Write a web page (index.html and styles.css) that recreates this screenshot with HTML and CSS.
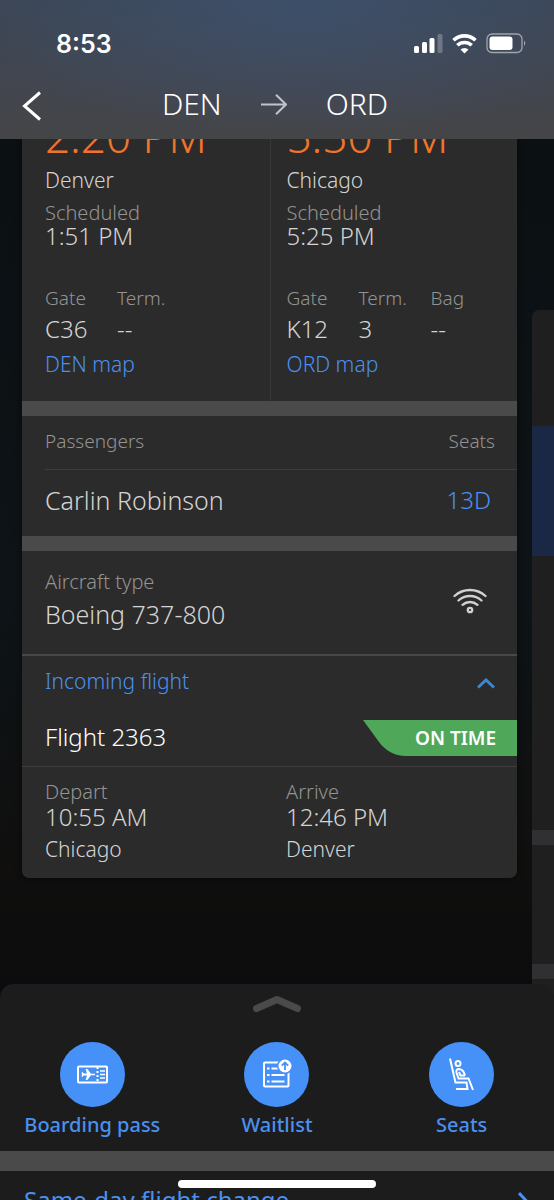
FILE: index.html
```
<!DOCTYPE html>
<html lang="en">
<head>
<meta charset="utf-8">
<meta name="viewport" content="width=device-width, initial-scale=1">
<title>DEN to ORD</title>
<link rel="stylesheet" href="styles.css">
</head>
<body>
<div class="app">
  <header class="top">
    <div class="status">
      <span class="clock">8:53</span>
      <svg class="status-icons" width="114" height="22" viewBox="0 0 114 22" aria-hidden="true">
        <g fill="#fff">
          <rect x="2" y="13" width="5" height="7" rx="1.5"/>
          <rect x="10" y="9" width="5" height="11" rx="1.5"/>
          <rect x="17.500" y="5" width="5" height="15" rx="1.500"/>
          <rect x="25.500" y="1" width="5" height="19" rx="1.500" opacity=".25"/>
          <path d="M52.500 20.500l-4-4a5.800 5.800 0 0 1 8 0z"/>
        </g>
        <g fill="none" stroke="#fff" stroke-width="3.600">
          <path d="M41.500 7.300a16 16 0 0 1 22 0"/>
          <path d="M45.300 12.300a10.500 10.500 0 0 1 14.400 0"/>
        </g>
        <rect x="75" y="1" width="35" height="18.500" rx="5" fill="none" stroke="#fff" stroke-opacity=".5" stroke-width="1.300"/>
        <rect x="77.500" y="3.500" width="23" height="13.500" rx="3" fill="#fff"/>
        <path d="M112 7.500q2.500 2.500 0 5.500z" fill="#fff" opacity=".5"/>
      </svg>
    </div>
    <div class="route">
      <button class="back" aria-label="Back">
        <svg width="20" height="30" viewBox="0 0 20 30" fill="none" stroke="#fff" stroke-width="3"><path d="M18 1.500L2.500 15L18 28.500"/></svg>
      </button>
      <h1 class="title">
        <span>DEN</span>
        <svg width="26" height="21" viewBox="0 0 26 21" fill="none" stroke="#bfc3cc" stroke-width="2"><path d="M0 10.500H25M15 .800L25 10.500L15 20.200"/></svg>
        <span>ORD</span>
      </h1>
    </div>
  </header>

  <main class="trips">
    <article class="card">
      <section class="legs">
        <div class="leg">
          <p class="big">2:20 PM</p>
          <p class="city">Denver</p>
          <p class="label sched">Scheduled</p>
          <p class="value tight">1:51 PM</p>
          <dl class="facts">
            <div><dt>Gate</dt><dd>C36</dd></div>
            <div><dt>Term.</dt><dd>--</dd></div>
          </dl>
          <a class="link" href="#den">DEN map</a>
        </div>
        <div class="leg">
          <p class="big">5:50 PM</p>
          <p class="city">Chicago</p>
          <p class="label sched">Scheduled</p>
          <p class="value tight">5:25 PM</p>
          <dl class="facts">
            <div><dt>Gate</dt><dd>K12</dd></div>
            <div><dt>Term.</dt><dd>3</dd></div>
            <div><dt>Bag</dt><dd>--</dd></div>
          </dl>
          <a class="link" href="#ord">ORD map</a>
        </div>
      </section>

      <section class="passengers bar">
        <div class="row head"><span class="label">Passengers</span><span class="label">Seats</span></div>
        <div class="row person"><span class="value">Carlin Robinson</span><a class="value seat" href="#seat">13D</a></div>
      </section>

      <section class="aircraft bar">
        <div>
          <p class="label">Aircraft type</p>
          <p class="value">Boeing 737-800</p>
        </div>
        <svg width="34" height="26" viewBox="0 0 34 26" fill="none" stroke="#d0d0d0" stroke-width="2.300" stroke-linecap="round" aria-label="Wi-Fi available">
          <path d="M1.500 8a23 23 0 0 1 31 0M5.500 12.500a17 17 0 0 1 23 0M9.500 16.800a11.500 11.500 0 0 1 15 0"/><circle cx="17" cy="22" r="2.200"/>
        </svg>
      </section>

      <section class="incoming">
        <button class="toggle" aria-expanded="true">
          <span>Incoming flight</span>
          <svg width="18" height="11" viewBox="0 0 18 11" fill="none" stroke="#3f86d0" stroke-width="3"><path d="M1 9.500L9 2L17 9.500"/></svg>
        </button>
        <div class="flight">
          <span class="value number">Flight 2363</span>
          <span class="badge">
            <svg class="badge-edge" width="46" height="36" viewBox="0 0 46 36" aria-hidden="true"><path d="M0 0H46V36H43C31 36 22 30 16 22Z" fill="#4fa85a"/></svg>
            <span class="badge-text">ON TIME</span>
          </span>
        </div>
        <div class="times">
          <div><p class="label">Depart</p><p class="value">10:55 AM</p><p class="city">Chicago</p></div>
          <div><p class="label">Arrive</p><p class="value">12:46 PM</p><p class="city">Denver</p></div>
        </div>
      </section>
    </article>
    <aside class="next" aria-label="Next trip">
      <div class="next-blue"></div>
      <div class="next-body"></div>
      <div class="next-foot"></div>
    </aside>
  </main>

  <section class="sheet">
    <button class="handle" aria-label="Expand">
      <svg width="50" height="20" viewBox="0 0 50 20" fill="none" stroke="#4a4a4a" stroke-width="7" stroke-linecap="round" stroke-linejoin="round"><path d="M4.500 14.500L25 5.500L45.500 14.500"/></svg>
    </button>
    <nav class="actions">
      <a href="#pass">
        <span class="disc"><svg width="33" height="33" viewBox="0 0 33 33" fill="none" stroke="#fff" stroke-width="2">
          <rect x="2" y="8.500" width="29" height="16" rx="1"/><path d="M21.500 9v16" stroke-dasharray="2 2"/><path d="M24 13h5M24 16.500h5M24 20h5" stroke-width="1.600"/>
          <path d="M5.800 13.500l2 2H11L9.600 11h1.800l3.500 4.700h4v1.600h-4L11.400 22H9.600L11 17.500H7.800l-2 2z" fill="#fff" stroke="none"/></svg></span>
        <span>Boarding pass</span>
      </a>
      <a href="#waitlist">
        <span class="disc"><svg width="33" height="33" viewBox="0 0 33 33" fill="none" stroke="#fff" stroke-width="2">
          <rect x="4" y="4.500" width="24.500" height="24" rx="1"/><path d="M11.500 10.500h8M11.500 17h13M11.500 23.500h13M7 10.500h2.500M7 17h2.500M7 23.500h2.500"/>
          <circle cx="25" cy="8" r="8" fill="#4691f8" stroke="none"/><circle cx="25" cy="8" r="6.500" fill="#fff" stroke="none"/><path d="M25 12V4.500M21.800 7.700l3.200-3.200l3.200 3.200" stroke="#4691f8" stroke-width="1.800"/></svg></span>
        <span>Waitlist</span>
      </a>
      <a href="#seats">
        <span class="disc"><svg width="33" height="33" viewBox="0 0 33 33" fill="none" stroke="#fff" stroke-width="2">
          <path d="M5 .500L10.500 24.500H21.500L22.500 31H11"/><circle cx="13" cy="5.500" r="2.500"/><path d="M20 17.500C19 13.500 17 11 13.500 11Q10.700 11.500 11.500 14.500L13.500 20.500H23.500L28 32"/><path d="M14 14l1.500 3.500h4.500"/></svg></span>
        <span>Seats</span>
      </a>
    </nav>
    <a class="change" href="#change">
      <span>Same-day flight change</span>
      <svg width="10" height="18" viewBox="0 0 10 18" fill="none" stroke="#4a90f0" stroke-width="3"><path d="M1 1L8.500 9L1 17"/></svg>
    </a>
    <div class="home"></div>
  </section>
</div>
</body>
</html>
```
FILE: styles.css
```
* { box-sizing: border-box; }
body { margin: 0; background: #0d0e11; color: #d4d4d4; font-family: "Noto Sans", "Open Sans", sans-serif; font-weight: 300; font-size: 21px; line-height: 28px; }
p, h1, dl, dd { margin: 0; font-weight: inherit; }
button { margin: 0; padding: 0; border: 0; background: none; color: inherit; font: inherit; }
a { color: #4a90f0; text-decoration: none; }
svg { display: block; flex: none; }

.app { display: flex; flex-direction: column; height: 100vh; overflow: hidden; }

.top { flex: none; padding: 28px 28px 0 22px; height: 139px; background: radial-gradient(ellipse 60% 100% at 55% 0, rgba(62, 82, 112, .75), rgba(62, 82, 112, 0)), linear-gradient(#3c4656, #424650 55%, #454547); color: #fff; }
.status { display: flex; justify-content: space-between; align-items: center; padding-left: 34px; height: 32px; }
.clock { font-family: Inter, sans-serif; font-size: 25px; font-weight: 600; }
.route { display: grid; grid-template-columns: 24px 1fr 22px; align-items: center; padding-top: 24px; }
.back { padding-top: 4px; }
.title { display: flex; justify-content: center; align-items: center; gap: 39px; font-size: 30px; line-height: 40px; }

.trips { flex: 1; min-height: 0; display: grid; grid-template-columns: minmax(0, 1fr) 22px; gap: 15px; align-items: start; padding-left: 22px; margin-bottom: -16px; overflow: hidden; background: linear-gradient(#0b1013, #0d1316 55%, #100f0e 85%, #0b0b0d); }
.card { background: #2b2b2b; border-radius: 0 0 7px 7px; box-shadow: 0 0 6px rgba(0, 0, 0, .5); overflow: hidden; }
.legs { display: grid; grid-template-columns: 1fr 1fr; }
.leg { padding: 0 0 23px 23px; }
.leg + .leg { padding-left: 16px; border-left: 1px solid #393939; }
.big { margin-top: -27px; font-size: 44px; line-height: 48px; color: #f0752c; }
.leg .city { margin-top: 6px; }
.label, dt { font-size: 20px; line-height: 22px; color: #939393; }
.value, dd { font-size: 25px; line-height: 32px; }
.sched { margin-top: 8px; }
.value.tight { font-size: 24px; line-height: 24px; }
.facts { display: flex; margin: 39px 0 5px; }
.facts div { width: 72px; }
.facts dt { font-size: 19px; }
.facts dd { margin-top: 4px; font-size: 24px; }
.link { display: block; }

.bar { border-top: 15px solid #4a4a4a; }
.row { display: flex; justify-content: space-between; }
.head { margin-left: 23px; padding: 14px 22px 17px 0; border-bottom: 1px solid #3d3d3d; }
.head .label { font-size: 19px; }
.person { padding: 14px 26px 20px 23px; }
.seat { font-size: 24px; }
.aircraft { display: flex; justify-content: space-between; align-items: center; padding: 20px 30px 24px 23px; }
.aircraft .value { margin-top: 5px; }

.incoming { border-top: 2px solid #484848; }
.toggle { display: flex; justify-content: space-between; align-items: center; width: 100%; padding: 11px 22px 25px 23px; color: #4a90f0; }
.toggle svg { margin-top: 5px; }
.flight { display: flex; justify-content: space-between; align-items: flex-start; padding: 0 0 10px 23px; border-bottom: 1px solid #3d3d3d; }
.number { color: #fff; font-size: 24px; line-height: 34px; }
.badge { display: flex; }
.badge-text { padding: 0 21px 0 6px; background: #4fa85a; color: #fff; font-size: 19px; font-weight: 600; line-height: 36px; }
.times { display: grid; grid-template-columns: 1fr 1fr; padding: 14px 0 15px 23px; }
.times > div + div { padding-left: 5px; }
.times .value { font-size: 24px; line-height: 28px; }
.times .city { margin-top: 4px; }

.next { display: flex; flex-direction: column; margin-top: 171px; height: 700px; border-radius: 7px 0 0 0; padding-top: 116px; background: #1f1f20; }
.next-blue { height: 130px; background: #1a2845; }
.next-body { height: 289px; border-bottom: 15px solid #303032; }
.next-foot { height: 134px; border-bottom: 15px solid #303032; }

.sheet { position: relative; flex: none; height: 216px; overflow: hidden; border-radius: 14px 14px 0 0; background: #1c1c1c; }
.handle { display: block; width: 100%; padding: 10px 0 28px; }
.handle svg { margin: 0 auto; }
.actions { display: grid; grid-template-columns: repeat(3, 1fr); padding-bottom: 12px; font-size: 20px; font-weight: 500; }
.actions a { display: flex; flex-direction: column; align-items: center; gap: 4px; }
.disc { display: grid; place-items: center; width: 65px; height: 65px; border-radius: 50%; background: #4691f8; }
.change { display: flex; justify-content: space-between; padding: 15px 26px 0 24px; border-top: 20px solid #4a4a4a; font-size: 24px; font-weight: 400; }
.change svg { margin-top: 6px; }
.home { position: absolute; bottom: 12px; left: 50%; width: 198px; height: 8px; margin-left: -99px; border-radius: 4px; background: #fff; }
```
